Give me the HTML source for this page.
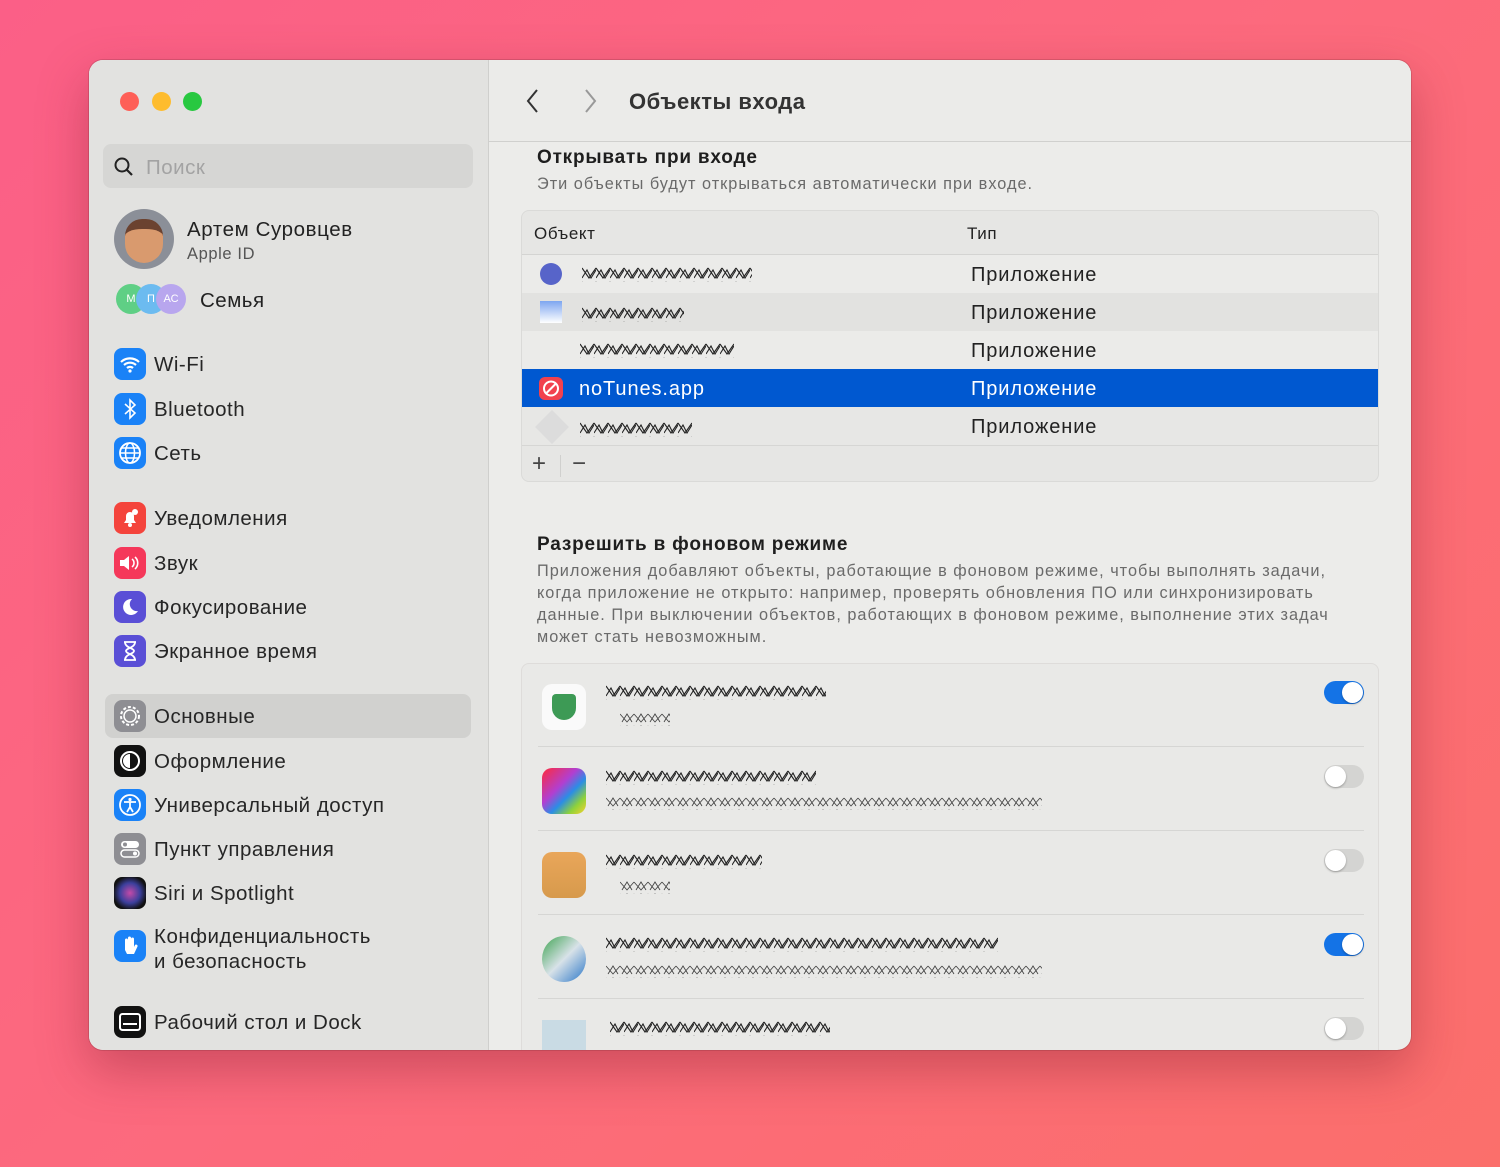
<!DOCTYPE html>
<html><head><meta charset="utf-8"><style>
*{margin:0;padding:0;box-sizing:border-box}
body{width:1500px;height:1167px;overflow:hidden;background:linear-gradient(135deg,#fb5f87 0%,#fc6a7d 50%,#fb6f6b 100%);font-family:"Liberation Sans","DejaVu Sans",sans-serif;position:relative}
.win{position:absolute;left:89px;top:60px;width:1322px;height:990px;border-radius:14px;overflow:hidden;background:#ececea;box-shadow:0 20px 50px rgba(120,20,40,.35),0 0 0 1px rgba(0,0,0,.12)}
.side{position:absolute;left:0;top:0;width:400px;height:990px;background:#e2e2e0;border-right:1px solid #cfcfcd}
.a{position:absolute;white-space:nowrap}
.dot{position:absolute;top:32px;width:19px;height:19px;border-radius:50%}
.it{position:absolute;left:25px;height:32px;display:flex;align-items:center;font-size:20.5px;letter-spacing:.5px;color:#262626;padding-top:2px}
.ic{width:32px;height:32px;border-radius:8px;margin-right:8px;display:flex;align-items:center;justify-content:center;flex:none;margin-top:-2px}
.hdr{position:absolute;left:400px;top:0;width:922px;height:82px;background:#ebebe9;border-bottom:1px solid #d0d0ce}
.tbl{position:absolute;left:432px;top:150px;width:858px;height:272px;border-radius:8px;background:#e6e6e4;border:1px solid #dadad8;overflow:hidden}
.row{position:absolute;left:0;width:858px;height:38px;font-size:20px;letter-spacing:.9px;color:#222}
.box{position:absolute;left:432px;top:603px;width:858px;height:400px;border-radius:8px;background:#e9e9e7;border:1px solid #dedcda}
.tg{position:absolute;left:802px;width:40px;height:23px;border-radius:12px}
.tg i{position:absolute;top:1px;width:21px;height:21px;border-radius:50%;background:#fff;box-shadow:0 1px 2px rgba(0,0,0,.3)}
.sep{position:absolute;left:16px;width:826px;height:1px;background:#d6d6d4}
.p{font-size:16.3px;letter-spacing:1px;color:#6a6a6a}
.h{font-size:19px;font-weight:bold;color:#1e1e1e;letter-spacing:.8px}
</style></head><body>
<svg width="0" height="0" style="position:absolute"><defs>
<pattern id="sc" width="14" height="14" patternUnits="userSpaceOnUse"><path d="M0 2L7 12L14 2M0 12L5 4L9 12L14 4" stroke="#222" stroke-width="1.1" fill="none"/></pattern>
<pattern id="sc2" width="14" height="12" patternUnits="userSpaceOnUse"><path d="M0 2L7 10L14 2M2 10L7 2L12 10" stroke="#444" stroke-width=".9" fill="none"/></pattern>
</defs></svg>
<div class="win">
 <div class="side">
  <div class="dot" style="left:31px;background:#fe5f57"></div>
  <div class="dot" style="left:63px;background:#febc2e"></div>
  <div class="dot" style="left:94px;background:#28c840"></div>
  <div class="a" style="left:14px;top:84px;width:370px;height:44px;border-radius:8px;background:#d6d6d4"></div>
  <svg class="a" style="left:24px;top:96px" width="22" height="22"><circle cx="9" cy="9" r="6.5" stroke="#222" stroke-width="2" fill="none"/><path d="M14 14l5 5" stroke="#222" stroke-width="2.2"/></svg>
  <div class="a" style="left:57px;top:96px;font-size:20.5px;letter-spacing:.5px;color:#a3a3a3">Поиск</div>
  <div class="a" style="left:25px;top:149px;width:60px;height:60px;border-radius:50%;background:#8b8f98"><div style="margin:10px auto 0;width:38px;height:44px;border-radius:18px 18px 20px 20px;background:#d99a6e;border-top:10px solid #6b4230"></div></div>
  <div class="a" style="left:98px;top:158px;font-size:20.5px;letter-spacing:.6px;color:#222">Артем Суровцев</div>
  <div class="a" style="left:98px;top:185px;font-size:16.5px;letter-spacing:.6px;color:#555">Apple ID</div>
  <div class="a" style="left:27px;top:224px;width:30px;height:30px;border-radius:50%;background:#5fcf85;color:#fff;font-size:11px;line-height:30px;text-align:center">М</div>
  <div class="a" style="left:47px;top:224px;width:30px;height:30px;border-radius:50%;background:#6cbbf0;color:#fff;font-size:11px;line-height:30px;text-align:center">П</div>
  <div class="a" style="left:67px;top:224px;width:30px;height:30px;border-radius:50%;background:#b8a6ee;color:#fff;font-size:11px;line-height:30px;text-align:center">АС</div>
  <div class="a" style="left:111px;top:229px;font-size:20.5px;letter-spacing:.5px;color:#222">Семья</div>

  <div class="it" style="top:288px"><div class="ic" style="background:#1a82f7"><svg width="22" height="18"><path d="M2 7a13 13 0 0 1 18 0M5 10a9 9 0 0 1 12 0M8 13a4.5 4.5 0 0 1 6 0" stroke="#fff" stroke-width="2.2" fill="none"/><circle cx="11" cy="16" r="1.6" fill="#fff"/></svg></div>Wi-Fi</div>
  <div class="it" style="top:333px"><div class="ic" style="background:#1a82f7"><svg width="14" height="22"><path d="M2 6l10 9-5 5V2l5 5-10 9" stroke="#fff" stroke-width="1.6" fill="none"/></svg></div>Bluetooth</div>
  <div class="it" style="top:377px"><div class="ic" style="background:#1a82f7"><svg width="24" height="24"><circle cx="12" cy="12" r="10" stroke="#fff" stroke-width="1.8" fill="none"/><ellipse cx="12" cy="12" rx="4.5" ry="10" stroke="#fff" stroke-width="1.5" fill="none"/><path d="M2 12h20M4 7h16M4 17h16" stroke="#fff" stroke-width="1.4"/></svg></div>Сеть</div>
  <div class="it" style="top:442px"><div class="ic" style="background:#f4443c"><svg width="20" height="20"><path d="M4 15h12l-2-3V8a4 4 0 0 0-8 0v4z" fill="#fff"/><circle cx="10" cy="17" r="2" fill="#fff"/><circle cx="15" cy="4" r="3" fill="#fff"/></svg></div>Уведомления</div>
  <div class="it" style="top:487px"><div class="ic" style="background:#f5385a"><svg width="24" height="20"><path d="M2 7h4l5-4v14l-5-4H2z" fill="#fff"/><path d="M14 6a5 5 0 0 1 0 8M17 4a8 8 0 0 1 0 12" stroke="#fff" stroke-width="1.6" fill="none"/></svg></div>Звук</div>
  <div class="it" style="top:531px"><div class="ic" style="background:#5a4fd6"><svg width="20" height="20"><path d="M12 2a8 8 0 1 0 6 12A7 7 0 0 1 12 2z" fill="#fff"/></svg></div>Фокусирование</div>
  <div class="it" style="top:575px"><div class="ic" style="background:#5a4fd6"><svg width="16" height="22"><path d="M2 2h12M2 20h12M3 2c0 6 9 6 9 9s-9 3-9 9M13 2c0 6-9 6-9 9s9 3 9 9" stroke="#fff" stroke-width="1.8" fill="none"/></svg></div>Экранное время</div>
  <div class="a" style="left:16px;top:634px;width:366px;height:44px;border-radius:8px;background:#d1d1cf"></div>
  <div class="it" style="top:640px"><div class="ic" style="background:#8e8e93"><svg width="24" height="24"><circle cx="12" cy="12" r="9" stroke="#fff" stroke-width="2" stroke-dasharray="3 2" fill="none"/><circle cx="12" cy="12" r="6" stroke="#fff" stroke-width="1.5" fill="none"/></svg></div>Основные</div>
  <div class="it" style="top:685px"><div class="ic" style="background:#111"><svg width="24" height="24"><circle cx="12" cy="12" r="9" stroke="#fff" stroke-width="2" fill="none"/><path d="M12 5a7 7 0 0 0 0 14z" fill="#fff"/></svg></div>Оформление</div>
  <div class="it" style="top:729px"><div class="ic" style="background:#1a82f7"><svg width="24" height="24"><circle cx="12" cy="12" r="10" stroke="#fff" stroke-width="1.8" fill="none"/><circle cx="12" cy="6.5" r="1.6" fill="#fff"/><path d="M6 9h12M12 9v5l-3 5M12 14l3 5" stroke="#fff" stroke-width="1.8" fill="none"/></svg></div>Универсальный доступ</div>
  <div class="it" style="top:773px"><div class="ic" style="background:#8e8e93"><svg width="24" height="24"><rect x="3" y="4" width="18" height="7" rx="3.5" fill="#fff"/><rect x="3" y="13" width="18" height="7" rx="3.5" fill="none" stroke="#fff" stroke-width="1.5"/><circle cx="7" cy="7.5" r="2" fill="#8e8e93"/><circle cx="17" cy="16.5" r="2" fill="#fff"/></svg></div>Пункт управления</div>
  <div class="it" style="top:817px"><div class="ic" style="background:radial-gradient(circle,#c44aa8 0,#3b3f9c 45%,#111 75%)"></div>Siri и Spotlight</div>
  <div class="it" style="top:870px"><div class="ic" style="background:#1a82f7"><svg width="20" height="22"><path d="M5 12V5a1.5 1.5 0 0 1 3 0v5V3a1.5 1.5 0 0 1 3 0v7V4a1.5 1.5 0 0 1 3 0v8l1-2a1.5 1.5 0 0 1 2.5 1.5L14 19H7l-2-4z" fill="#fff"/></svg></div></div>
  <div class="a" style="left:65px;top:864px;font-size:20.5px;letter-spacing:.5px;color:#262626;line-height:25px">Конфиденциальность<br>и безопасность</div>
  <div class="it" style="top:946px"><div class="ic" style="background:#111"><svg width="24" height="20"><rect x="2" y="2" width="20" height="16" rx="2.5" stroke="#fff" stroke-width="2" fill="none"/><path d="M5 12h14" stroke="#fff" stroke-width="2"/></svg></div>Рабочий стол и Dock</div>
 </div>
 <div class="hdr">
  <svg class="a" style="left:36px;top:28px" width="16" height="26"><path d="M12 2L3 13l9 11" stroke="#333" stroke-width="2" fill="none"/></svg>
  <svg class="a" style="left:94px;top:28px" width="16" height="26"><path d="M3 2l9 11-9 11" stroke="#999" stroke-width="2" fill="none"/></svg>
  <div class="a" style="left:140px;top:29px;font-size:22px;font-weight:bold;letter-spacing:.5px;color:#333">Объекты входа</div>
 </div>
 <div class="a h" style="left:448px;top:87px">Открывать при входе</div>
 <div class="a p" style="left:448px;top:115px">Эти объекты будут открываться автоматически при входе.</div>
 <div class="tbl">
  <div class="a" style="left:12px;top:13px;font-size:17px;letter-spacing:.6px;color:#222">Объект</div>
  <div class="a" style="left:445px;top:13px;font-size:17px;letter-spacing:.6px;color:#222">Тип</div>
  <div class="a" style="left:0;top:43px;width:858px;height:1px;background:#d4d4d2"></div>
  <div class="row" style="top:44px;background:#ebebe9"><div class="a" style="left:18px;top:8px;width:22px;height:22px;border-radius:50%;background:#5764c9"></div><svg class="a" style="left:60px;top:11px" width="170" height="16"><rect width="170" height="16" fill="url(#sc)"/></svg><div class="a" style="left:449px;top:9px">Приложение</div></div>
  <div class="row" style="top:82px;background:#e2e2e0"><div class="a" style="left:18px;top:8px;width:22px;height:22px;background:linear-gradient(#7da6f0,#fff)"></div><svg class="a" style="left:60px;top:13px" width="102" height="16"><rect width="102" height="16" fill="url(#sc)"/></svg><div class="a" style="left:449px;top:9px">Приложение</div></div>
  <div class="row" style="top:120px;background:#ebebe9"><svg class="a" style="left:58px;top:11px" width="154" height="16"><rect width="154" height="16" fill="url(#sc)"/></svg><div class="a" style="left:449px;top:9px">Приложение</div></div>
  <div class="row" style="top:158px;background:#0058d0;color:#fff"><div class="a" style="left:17px;top:8px;width:24px;height:23px;border-radius:6px;background:#f2414e"><svg width="24" height="23"><circle cx="12" cy="11.5" r="7" stroke="#fff" stroke-width="2" fill="none"/><path d="M7 16.5l10-10" stroke="#fff" stroke-width="2"/></svg></div><div class="a" style="left:57px;top:9px">noTunes.app</div><div class="a" style="left:449px;top:9px">Приложение</div></div>
  <div class="row" style="top:196px;background:#e7e7e5"><div class="a" style="left:18px;top:8px;width:24px;height:24px;background:#dcdcdc;transform:rotate(45deg)"></div><svg class="a" style="left:58px;top:14px" width="112" height="16"><rect width="112" height="16" fill="url(#sc)"/></svg><div class="a" style="left:449px;top:9px">Приложение</div></div>
  <div class="a" style="left:0;top:234px;width:858px;height:1px;background:#d6d6d4"></div>
  <div class="a" style="left:10px;top:239px;font-size:24px;color:#444">+</div>
  <div class="a" style="left:38px;top:244px;width:1px;height:22px;background:#d0d0ce"></div>
  <div class="a" style="left:50px;top:239px;font-size:24px;color:#444">−</div>
 </div>
 <div class="a h" style="left:448px;top:474px">Разрешить в фоновом режиме</div>
 <div class="a p" style="left:448px;top:500px;line-height:22px">Приложения добавляют объекты, работающие в фоновом режиме, чтобы выполнять задачи,<br>когда приложение не открыто: например, проверять обновления ПО или синхронизировать<br>данные. При выключении объектов, работающих в фоновом режиме, выполнение этих задач<br>может стать невозможным.</div>
 <div class="box">
  <div class="a" style="left:20px;top:20px;width:44px;height:46px;border-radius:10px;background:#fafafa"><div style="margin:10px auto;width:24px;height:26px;border-radius:4px 4px 12px 12px;background:#3d9a55"></div></div>
  <svg class="a" style="left:84px;top:20px" width="220" height="16"><rect width="220" height="16" fill="url(#sc)"/></svg>
  <svg class="a" style="left:98px;top:48px" width="50" height="14"><rect width="50" height="14" fill="url(#sc2)"/></svg>
  <div class="tg" style="top:17px;background:#1473e6"><i style="left:18px"></i></div>
  <div class="sep" style="top:82px"></div>
  <div class="a" style="left:20px;top:104px;width:44px;height:46px;border-radius:10px;background:linear-gradient(135deg,#ff2a3b,#b23fd0 40%,#2a8de6 60%,#8fd23a 80%,#f7d32f)"></div>
  <svg class="a" style="left:84px;top:105px" width="210" height="16"><rect width="210" height="16" fill="url(#sc)"/></svg>
  <svg class="a" style="left:84px;top:132px" width="436" height="14"><rect width="436" height="14" fill="url(#sc2)"/></svg>
  <div class="tg" style="top:101px;background:#d4d4d2"><i style="left:1px"></i></div>
  <div class="sep" style="top:166px"></div>
  <div class="a" style="left:20px;top:188px;width:44px;height:46px;border-radius:10px;background:linear-gradient(#e9a65a,#d79a4c)"></div>
  <svg class="a" style="left:84px;top:189px" width="156" height="16"><rect width="156" height="16" fill="url(#sc)"/></svg>
  <svg class="a" style="left:98px;top:216px" width="50" height="14"><rect width="50" height="14" fill="url(#sc2)"/></svg>
  <div class="tg" style="top:185px;background:#d4d4d2"><i style="left:1px"></i></div>
  <div class="sep" style="top:250px"></div>
  <div class="a" style="left:20px;top:272px;width:44px;height:46px;border-radius:50%;background:linear-gradient(135deg,#3da350,#d8e2e8 50%,#2b77c8)"></div>
  <svg class="a" style="left:84px;top:272px" width="392" height="16"><rect width="392" height="16" fill="url(#sc)"/></svg>
  <svg class="a" style="left:84px;top:300px" width="436" height="14"><rect width="436" height="14" fill="url(#sc2)"/></svg>
  <div class="tg" style="top:269px;background:#1473e6"><i style="left:18px"></i></div>
  <div class="sep" style="top:334px"></div>
  <div class="a" style="left:20px;top:356px;width:44px;height:40px;background:#c9dbe4"></div>
  <svg class="a" style="left:88px;top:356px" width="220" height="16"><rect width="220" height="16" fill="url(#sc)"/></svg>
  <div class="tg" style="top:353px;background:#d4d4d2"><i style="left:1px"></i></div>
 </div>
</div>
</body></html>
